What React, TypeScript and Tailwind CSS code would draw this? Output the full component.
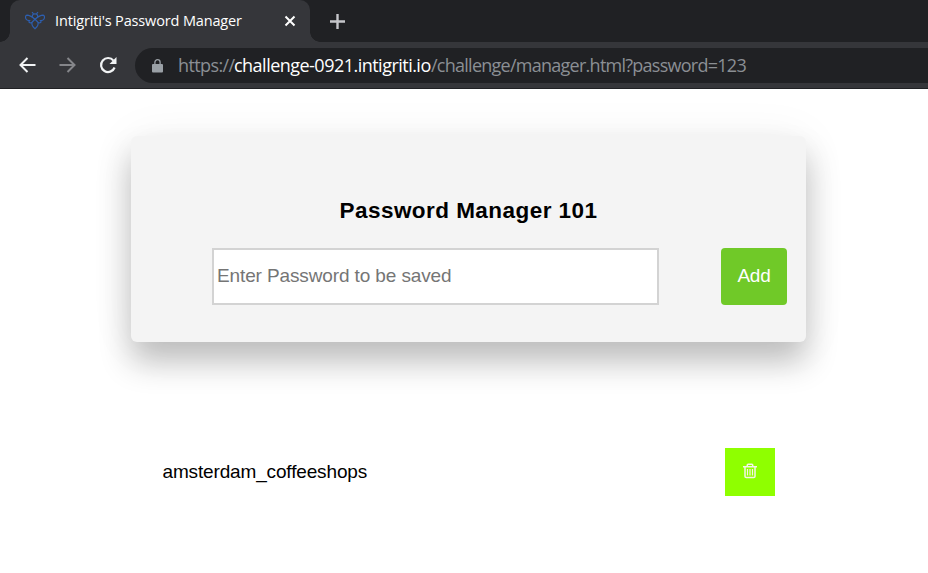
import { useState } from "react";

function BeeLogo() {
  return (
    <svg className="h-5 w-5 shrink-0" viewBox="0 0 20 20" fill="none" stroke="#2d5fb0" strokeWidth="1.2">
      <path d="M7 1.200 8.600 2.800M13 1.200 11.400 2.800" />
      <path d="M7.300 6V4.800q.3-2 2.700-2t2.700 2V6" />
      <path d="M10 8.200C7.500 6.200 4.500 4.200 2 4.200.3 4.400.2 6.600 1 8c1 1.700 2.500 1.500 3.500 1.600-1.500 1.500.5 3.200 2.500 1.600L10 8.200Z" />
      <path d="M10 8.200c2.500-2 5.500-4 8-4 1.700.2 1.800 2.400 1 3.800-1 1.700-2.500 1.500-3.500 1.600 1.500 1.500-.5 3.200-2.500 1.600L10 8.200Z" />
      <path d="M7 11.400c-.6 2.600.8 4.600 3 6.400 2.200-1.800 3.600-3.800 3-6.400" />
    </svg>
  );
}

function TabStrip() {
  return (
    <div className="flex h-[42px] items-start bg-[#202124]">
      <div className="relative ml-[10px] flex h-[42px] w-[300px] items-center rounded-t-[10px] bg-[#35363a] pl-[15px]">
        <div className="absolute bottom-0 -left-[10px] h-[10px] w-[10px] bg-[radial-gradient(circle_at_0_0,#202124_9.500px,#35363a_10px)]" />
        <div className="absolute -right-[10px] bottom-0 h-[10px] w-[10px] bg-[radial-gradient(circle_at_100%_0,#202124_9.500px,#35363a_10px)]" />
        <BeeLogo />
        <span className="ml-[10px] w-[229px] shrink-0 font-['Open_Sans',sans-serif] text-[14.500px] leading-5 tracking-[-0.150px] whitespace-nowrap text-white">
          Intigriti's Password Manager
        </span>
        <svg className="h-3 w-3 shrink-0" viewBox="0 0 12 12" stroke="#fff" strokeWidth="2">
          <path d="M1.500 1.500 10.500 10.500M10.500 1.500 1.500 10.500" />
        </svg>
      </div>
      <svg className="mt-[14px] ml-5 h-[15px] w-[15px]" viewBox="0 0 15 15" stroke="#c5c6ca" strokeWidth="2.400">
        <path d="M0 7.500H15M7.500 0V15" />
      </svg>
    </div>
  );
}

function Toolbar() {
  return (
    <div className="flex h-[47px] items-center border-b border-[#202124] bg-[#35363a]">
      <svg className="ml-[19px] h-4 w-[17px]" viewBox="0 0 17 16" fill="none" stroke="#f1f3f4" strokeWidth="2">
        <path d="M16.500 8H1.500M8.500 1 1.500 8l7 7" />
      </svg>
      <svg className="ml-[23px] h-4 w-[17px]" viewBox="0 0 17 16" fill="none" stroke="#85868a" strokeWidth="2">
        <path d="M.5 8h15M8.500 1l7 7-7 7" />
      </svg>
      <svg className="ml-[23px] h-[18px] w-[18px]" viewBox="0 0 18 18" fill="none" stroke="#f1f3f4" strokeWidth="2.200">
        <path d="M15.600 11.500A7 7 0 1 1 14.500 4.600" />
        <path d="M17.500 1v7h-7Z" fill="#f1f3f4" stroke="none" />
      </svg>
      <div className="ml-[18px] flex h-[35px] flex-1 items-center rounded-l-full bg-[#202124] pl-[17px]">
        <svg className="mt-[2px] h-[14px] w-[11px]" viewBox="0 0 11 14">
          <path d="M2.900 6V3.300a2.600 2.600 0 0 1 5.200 0V6" fill="none" stroke="#9aa0a6" strokeWidth="1.300" />
          <rect y="5" width="11" height="8.500" rx="1" fill="#9aa0a6" />
        </svg>
        <div className="ml-[15px] flex font-['Open_Sans',sans-serif] text-[18px] leading-6 whitespace-nowrap text-[#8b8f94]">
          <span className="w-[56px] tracking-[-0.600px]">https://</span>
          <span className="w-[197px] tracking-[-0.520px] text-white">challenge-0921.intigriti.io</span>
          <span className="tracking-[-0.740px]">/challenge/manager.html?password=123</span>
        </div>
      </div>
    </div>
  );
}

function TrashIcon() {
  return (
    <svg className="h-4 w-[14px]" viewBox="0 0 14 16" fill="none" stroke="#f4f4e8" strokeWidth="1.500">
      <path d="M0 3.700h14M4.300 3.500V2q0-.8.8-.8h3.800q.8 0 .8.800v1.500M2 4v9.200q0 1.300 1.300 1.300h7.400q1.300 0 1.300-1.300V4" />
      <path d="M4.500 6v6.500M7 6v6.500M9.500 6v6.500" strokeWidth="1.200" />
    </svg>
  );
}

export default function App() {
  const [password, setPassword] = useState("");

  return (
    <div className="h-[573px] w-[928px] overflow-hidden bg-white font-['Liberation_Sans',Arial,sans-serif]">
      <TabStrip />
      <Toolbar />
      <main className="pt-[47px] pl-[131px]">
        <section className="h-[206px] w-[675px] rounded-md bg-[#f4f4f4] pt-[60px] shadow-[0_2px_48px_rgba(0,0,0,0.06),0_20px_32px_rgba(0,0,0,0.24)]">
          <h1 className="text-center text-[22.500px] leading-[30px] font-bold tracking-[0.450px] text-black">
            Password Manager 101
          </h1>
          <div className="mt-[22px] flex pl-[81px]">
            <input
              className="h-[57px] w-[447px] border-2 border-[#d3d3d3] bg-white pr-1 pb-[2px] pl-[3px] text-[19px] tracking-[-0.120px] text-black outline-none placeholder:text-[#757575]"
              placeholder="Enter Password to be saved"
              value={password}
              onChange={(e) => setPassword(e.target.value)}
            />
            <button className="ml-[62px] h-[57px] w-[66px] rounded bg-[#70c928] text-[19px] tracking-[-0.200px] text-white">
              Add
            </button>
          </div>
        </section>
        <div className="mt-[106px] flex h-12 w-[644px] items-center justify-between pl-[31.500px]">
          <span className="text-[19px] leading-6 tracking-[-0.150px] text-black">amsterdam_coffeeshops</span>
          <button aria-label="Delete" className="flex h-12 w-[50px] items-center justify-center bg-[#8fff00] pb-[2px]">
            <TrashIcon />
          </button>
        </div>
      </main>
    </div>
  );
}
